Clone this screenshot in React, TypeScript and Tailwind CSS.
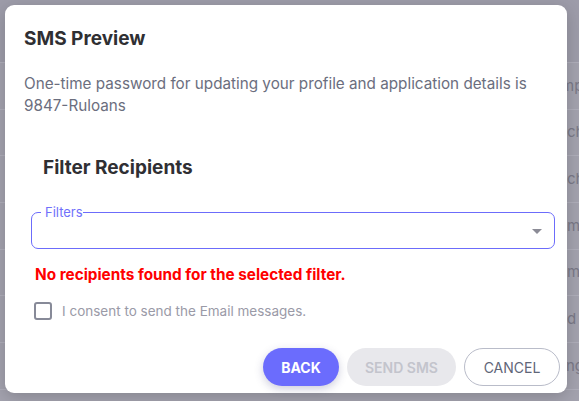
import React from "react";

const rows: { t: string; pl: string }[] = [
  { t: "mp", pl: "pl-[561px]" },
  { t: "ch", pl: "pl-[567px]" },
  { t: "ch", pl: "pl-[567px]" },
  { t: "m", pl: "pl-[567px]" },
  { t: "m", pl: "pl-[567px]" },
  { t: "d t", pl: "pl-[567px]" },
  { t: "ng", pl: "pl-[566px]" },
];

export default function App() {
  return (
    <div
      className="relative w-[579px] h-[401px] overflow-hidden bg-[#a3a2ae]"
      style={{ fontFamily: "Inter, 'Noto Sans', sans-serif" }}
    >
      {/* background table */}
      <div className="flex flex-col">
        <div className="h-[63px] bg-[#9d9ca9] border-b border-[#afaeba]" />
        {rows.map((r, i) => (
          <div
            key={i}
            className={`h-[46.7px] flex items-center border-b border-[#afaeba] text-[15px] text-[#7a7987] whitespace-nowrap ${r.pl}`}
          >
            {r.t}
          </div>
        ))}
      </div>

      {/* dialog */}
      <div className="absolute left-[5px] top-[5px] w-[562px] h-[388px] bg-white rounded-[9px] shadow-[0_4px_16px_rgba(0,0,0,0.18)] flex flex-col px-[19px] pt-[20px]">
        <h2 className="text-[19px] leading-[28px] font-bold text-[#2f2f33]">SMS Preview</h2>
        <p className="mt-[20px] text-[15.25px] leading-[22px] text-[#6b6e7e]">
          One-time password for updating your profile and application details is 9847-Ruloans
        </p>
        <h3 className="mt-[37px] ml-[19px] text-[19px] leading-[28px] font-bold text-[#2f2f33]">
          Filter Recipients
        </h3>

        <div className="relative mt-[30px] ml-[7px] w-[524px] h-[37px] border border-[#6c6cfb] rounded-[7px]">
          <span className="absolute left-[9px] top-[-8px] pl-[4px] bg-white text-[13px] leading-[14px] text-[#7070fb]">
            Filters
          </span>
          <span className="absolute right-[12px] top-[16px] w-0 h-0 border-l-[5px] border-r-[5px] border-t-[5px] border-l-transparent border-r-transparent border-t-[#8b8b96]" />
        </div>

        <div className="mt-[16px] ml-[11px] text-[15.3px] leading-[20px] font-bold text-[#ff0000]">
          No recipients found for the selected filter.
        </div>

        <label className="mt-[16px] ml-[10px] flex items-center h-[20px]">
          <span className="w-[18px] h-[18px] border-2 border-[#878a98] rounded-[3px] bg-white" />
          <span className="ml-[10px] text-[13.5px] leading-[20px] text-[#9a9aa7]">
            I consent to send the Email messages.
          </span>
        </label>

        <div className="mt-[27px] -mr-[12px] flex justify-end gap-[8px]">
          <button className="w-[76px] h-[38px] rounded-full bg-[#6b6cfd] text-white text-[14px] font-bold shadow-[0_3px_8px_rgba(60,60,120,0.25)]">
            BACK
          </button>
          <button className="w-[109px] h-[38px] rounded-full bg-[#e8e8ec] text-[#c3c4cc] text-[14px] font-semibold">
            SEND SMS
          </button>
          <button className="w-[96px] h-[38px] rounded-full border border-[#b9bcc9] bg-white text-[#5f6678] text-[14px] font-normal">
            CANCEL
          </button>
        </div>
      </div>
    </div>
  );
}
